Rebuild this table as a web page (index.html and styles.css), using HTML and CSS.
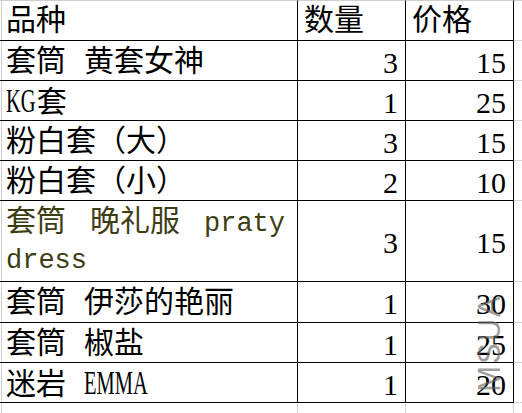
FILE: index.html
```html
<!DOCTYPE html>
<html lang="zh">
<head>
<meta charset="utf-8">
<title>品种</title>
<link rel="stylesheet" href="styles.css">
</head>
<body>
<div class="sheet">
  <div class="c c1 hd"><span>品种</span></div>
  <div class="c hd"><span>数量</span></div>
  <div class="c hd"><span>价格</span></div>
  <div class="c x hd"></div>

  <div class="c c1"><span>套筒 黄套女神</span></div>
  <div class="c n">3</div>
  <div class="c n">15</div>
  <div class="c x"></div>

  <div class="c c1"><span><span class="nar kg">KG</span>套</span></div>
  <div class="c n">1</div>
  <div class="c n">25</div>
  <div class="c x"></div>

  <div class="c c1"><span>粉白套（大）</span></div>
  <div class="c n">3</div>
  <div class="c n">15</div>
  <div class="c x"></div>

  <div class="c c1"><span>粉白套（小）</span></div>
  <div class="c n">2</div>
  <div class="c n">10</div>
  <div class="c x"></div>

  <div class="c c1 wrap"><span>套筒 晚礼服 <span class="en">praty</span><br><span class="en">dress</span></span></div>
  <div class="c n">3</div>
  <div class="c n">15</div>
  <div class="c x"></div>

  <div class="c c1"><span>套筒 伊莎的艳丽</span></div>
  <div class="c n">1</div>
  <div class="c n">30</div>
  <div class="c x"></div>

  <div class="c c1"><span>套筒 椒盐</span></div>
  <div class="c n">1</div>
  <div class="c n">25</div>
  <div class="c x"></div>

  <div class="c c1"><span>迷岩 <span class="nar emma">EMMA</span></span></div>
  <div class="c n">1</div>
  <div class="c n">20</div>
  <div class="c x"></div>

  <div class="c c1 e"></div>
  <div class="c e"></div>
  <div class="c e"></div>
  <div class="c x e"></div>

  <div class="mark">MSUA</div>
</div>
</body>
</html>
```
FILE: styles.css
```css
html, body {
  margin: 0;
  padding: 0;
  background: #fff;
}
body {
  width: 522px;
  height: 413px;
  overflow: hidden;
}
.sheet {
  position: relative;
  display: grid;
  grid-template-columns: 298px 108px 108px 8px;
  grid-template-rows: 41px 40px 40px 40px 40px 81px 41px 40px 40px 12px;
  font-family: "Liberation Mono", "Noto Sans CJK SC", monospace;
  font-size: 30px;
  color: #000;
}
.c {
  box-sizing: border-box;
  border-right: 1px solid #000;
  border-bottom: 1px solid #000;
  display: flex;
  align-items: center;
  padding: 4px 6px 0 6px;
  line-height: 36px;
  white-space: pre;
  overflow: visible;
}
.c1 {
  background: linear-gradient(#cfcfcf, #cfcfcf) 1px 0 / 1px 100% no-repeat;
}
.hd {
  border-top: 1px solid #cfcfcf;
  padding-top: 2px;
}
.x {
  border-right: none;
  border-bottom: 1px solid #d4d4d4;
  padding: 0;
}
.e {
  border-bottom: none;
  border-right: 1px solid #d4d4d4;
}
.x.e {
  border-right: none;
}
.n {
  justify-content: flex-end;
  padding-right: 7px;
  font-family: "Liberation Serif", serif;
  font-size: 30px;
}
.en {
  font-size: 27px;
}
.nar {
  display: inline-block;
  font-family: "Liberation Serif", serif;
  font-size: 33px;
  transform: scaleX(0.62);
  transform-origin: 0 50%;
}
.kg {
  margin-right: -17px;
}
.emma {
  margin-right: -38px;
}
.wrap {
  color: #3d3d14;
  word-spacing: 6px;
  padding-top: 2px;
}
.mark {
  position: absolute;
  left: 434px;
  top: 331px;
  width: 112px;
  text-align: center;
  transform: rotate(-90deg);
  font-family: "Liberation Sans", sans-serif;
  font-size: 31px;
  line-height: 24px;
  letter-spacing: 2px;
  color: rgba(100, 100, 100, 0.65);
}
```
